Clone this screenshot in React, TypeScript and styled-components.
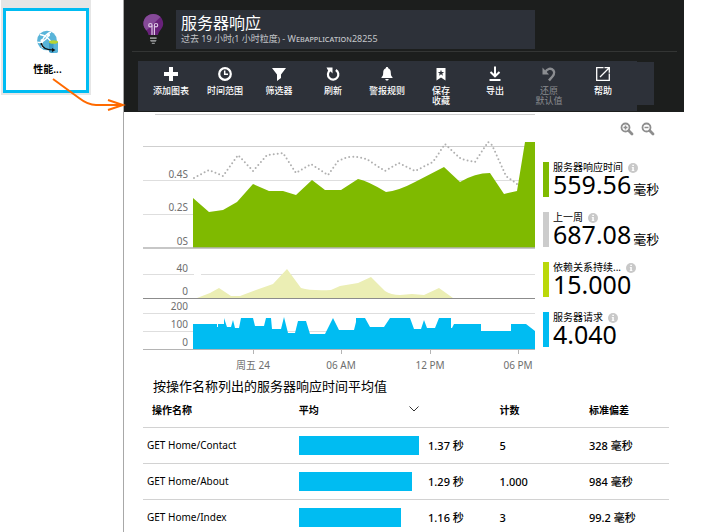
import React from "react";
import styled, { createGlobalStyle } from "styled-components";

const CYAN = "#00bcf2";
const GREEN = "#7fba00";
const LIME = "#bad80a";
const SILVER = "#cccccc";

const GlobalStyle = createGlobalStyle`
  *, *::before, *::after { box-sizing: border-box; }
  body {
    margin: 0;
    background: #fff;
    color: #000;
    font-family: "Noto Sans", "Noto Sans CJK SC", sans-serif;
    font-size: 11px;
  }
  button { font: inherit; color: inherit; border: 0; padding: 0; background: none; cursor: pointer; }
  svg { display: block; }
`;

const Page = styled.div`
  position: relative;
  display: grid;
  grid-template-columns: 123px minmax(0, 1fr);
  height: 100vh;
  overflow: hidden;
`;

const TileColumn = styled.aside`
  padding-left: 1px;
`;

const TileFrame = styled.div`
  width: 90px;
  padding: 8px 2px 2px;
  background: #e6e6e6;
`;

const Tile = styled.button`
  display: flex;
  flex-direction: column;
  align-items: center;
  gap: 8px;
  width: 100%;
  height: 85px;
  padding: 19px 0 0 3px;
  border: 3px solid ${CYAN};
  background: #fff;
  font-size: 10px;
  line-height: 14px;
  font-weight: 600;
`;

const Connector = styled.svg`
  position: absolute;
  left: 50px;
  top: 76px;
  pointer-events: none;
`;

const Blade = styled.main`
  border-left: 1px solid #a8a8a8;
`;

const Header = styled.header`
  margin-right: 31px;
  padding: 10px 7px 1px 8px;
  background: #1c1e1d;
`;

const TitleRow = styled.div`
  display: grid;
  grid-template-columns: 44px minmax(0, 1fr);
  padding: 0 142px 2px 0;
  border-bottom: 1px solid #333534;
`;

const BulbCell = styled.div`
  padding: 4px 0 0 10px;
`;

const TitlePanel = styled.div`
  height: 39px;
  padding: 3px 5px 0;
  background: #2d3139;
  overflow: hidden;
  white-space: nowrap;
`;

const Title = styled.h1`
  margin: 0;
  font-size: 16px;
  line-height: 20px;
  font-weight: 400;
  color: #fff;
`;

const Subtitle = styled.p`
  margin: 0;
  font-size: 9px;
  line-height: 12px;
  font-variant: small-caps;
  color: #c4c6c9;
`;

const ToolbarRow = styled.div`
  display: flex;
  padding: 9px 23px 0 6px;
`;

const Toolbar = styled.nav`
  flex: 1;
  display: grid;
  grid-template-columns: repeat(9, minmax(0, 1fr));
  height: 50px;
  padding: 5px 7px 0 6px;
  background: #2d3139;
`;

const ToolbarEnd = styled.div`
  width: 17px;
  height: 43px;
  margin-top: 1px;
  background: #2d3139;
`;

const ToolButton = styled.button<{ $dim?: boolean }>`
  display: flex;
  flex-direction: column;
  align-items: center;
  gap: 4px;
  color: ${(p) => (p.$dim ? "#8b8d91" : "#fff")};
  font-size: 9px;
  line-height: 10px;
  font-weight: ${(p) => (p.$dim ? 400 : 500)};
  white-space: pre-line;
`;

const Metrics = styled.section`
  display: grid;
  grid-template-columns: minmax(0, 1fr) 172px;
  column-gap: 8px;
  padding-left: 19px;
`;

const Plot = styled.svg`
  width: 100%;
  height: auto;
`;

const AxisText = styled.text`
  font-size: 10px;
  fill: #6e6e6e;
`;

const Side = styled.div`
  padding-top: 10px;
`;

const ZoomButtons = styled.div`
  display: flex;
  gap: 7px;
  padding-left: 77px;
  margin-bottom: 26px;
`;

const Legend = styled.ul`
  display: grid;
  gap: 15px;
  margin: 0;
  padding: 0;
  list-style: none;
`;

const LegendItem = styled.li<{ $color: string }>`
  height: 35px;
  padding-left: 4px;
  border-left: 6px solid ${(p) => p.$color};
  white-space: nowrap;
`;

const LegendLabel = styled.div`
  display: flex;
  align-items: center;
  gap: 5px;
  font-size: 10px;
  line-height: 11px;
`;

const LegendValue = styled.div`
  font-size: 25px;
  line-height: 23px;
`;

const Unit = styled.span`
  margin-left: 2px;
  font-size: 13px;
`;

const Operations = styled.section`
  margin-right: 46px;
  padding-left: 19px;
`;

const SectionTitle = styled.h2`
  margin: 0;
  padding-left: 10px;
  font-size: 13px;
  line-height: 20px;
  font-weight: 400;
`;

const Table = styled.table`
  width: 100%;
  table-layout: fixed;
  border-collapse: collapse;
`;

const HeadCell = styled.th<{ $indent?: number }>`
  height: 31px;
  padding: 0 0 4px ${(p) => p.$indent || 0}px;
  border-bottom: 1px solid #d2d2d2;
  text-align: left;
  font-size: 10px;
  font-weight: 700;
`;

const SortButton = styled.button`
  display: flex;
  align-items: center;
  justify-content: space-between;
  width: 120px;
  font-weight: 700;
`;

const Cell = styled.td<{ $indent?: number; $strong?: boolean }>`
  height: 36px;
  padding: 0 0 0 ${(p) => p.$indent || 0}px;
  border-bottom: 1px solid #d2d2d2;
  font-size: ${(p) => (p.$strong ? 11 : 10)}px;
  font-weight: ${(p) => (p.$strong ? 500 : 400)};
  white-space: nowrap;
`;

const Bar = styled.div`
  height: 19px;
  background: ${CYAN};
`;

const InfoIcon = () => (
  <svg width="10" height="10" viewBox="0 0 10 10" aria-hidden="true">
    <circle cx="5" cy="5" r="5" fill="#c8c8c8" />
    <path d="M4.3 1.8h1.6v1.3H4.3zM3.8 4h2v3.2h.6v.8H3.7v-.8h.6V4.8h-.5z" fill="#fff" />
  </svg>
);

const Magnifier = ({ plus }: { plus?: boolean }) => (
  <svg width="14" height="14" viewBox="0 0 14 14" fill="none" stroke="#8e8e8e">
    <circle cx="5.5" cy="5.5" r="4" strokeWidth="1.8" />
    <path d="M8.800 8.800 12 12" strokeWidth="2.800" strokeLinecap="round" />
    <path d={plus ? "M3.500 5.500h4M5.500 3.500v4" : "M3.500 5.500h4"} strokeWidth="1.500" />
  </svg>
);

const Bulb = () => (
  <svg width="22" height="31" viewBox="0 0 22 31" aria-hidden="true">
    <path d="M11.300 0C5.500 0 1.400 4.400 1.400 9.800c0 4.500 4 6.400 5.200 11.200h9.400C17.200 16.200 21.200 14.300 21.200 9.800 21.200 4.400 17.100 0 11.300 0z" fill="#68217a" />
    <path d="M11.300 0C5.500 0 1.400 4.400 1.400 9.800c0 3 1.500 4.800 3 6.700L18.500 3C16.500 1 14 0 11.300 0z" fill="#854a98" />
    <g fill="none" stroke="#dcc6e4" strokeWidth="1.200">
      <circle cx="8.400" cy="11.200" r="1.700" />
      <circle cx="14" cy="11.200" r="1.700" />
      <path d="M10 11.500V21M12.400 11.500V21" />
    </g>
    <path d="M8 23.200h6.600v1.700H8zM8 26h6.600l-.8 1.700H8.800zM9.800 28.700h3v1.200h-3z" fill="#8f9192" />
  </svg>
);

const AppTileIcon = () => (
  <svg width="24" height="24" viewBox="0 0 24 24" aria-hidden="true">
    <circle cx="11" cy="10.500" r="9.800" fill="#59b4d9" />
    <g fill="none" stroke="#fff" strokeWidth="1.400">
      <path d="M4 4.500C9 5 14 9 16 14" />
      <path d="M15 2C8 5 5 11 6.500 18" />
      <path d="M1.500 12C5 14 11 9 13 5" />
    </g>
    <circle cx="12.500" cy="5" r="1.600" fill="#fff" />
    <circle cx="6" cy="10.500" r="1.500" fill="#fff" />
    <path d="M13 12h9v9.500c0 2-9 2-9 0z" fill="#3999c6" />
    <path d="M17.500 13h4.500v8.500c0 1-2 1.500-4.500 1.500z" fill="#59b4d9" />
    <ellipse cx="17.500" cy="12" rx="4.500" ry="1.800" fill="#b8d432" />
    <path d="M5.500 14c1 4 5 6 12 6" fill="none" stroke="#111" strokeWidth="1.200" />
    <path d="M16 18l3.500 2L16 22z" fill="#111" />
    <circle cx="5.500" cy="14" r="1" fill="#111" />
  </svg>
);

const icons: Record<string, React.ReactNode> = {
  add: <path d="M6 1h4v5h5v4h-5v5H6v-5H1V6h5z" fill="currentColor" />,
  clock: (
    <g fill="none" stroke="currentColor">
      <circle cx="8" cy="8" r="5.800" strokeWidth="2.200" />
      <path d="M7.700 4.500V8.300H11" strokeWidth="1.500" />
    </g>
  ),
  filter: <path d="M1 2h14L10 8.500V12l-4 3V8.500z" fill="currentColor" />,
  refresh: (
    <g>
      <path d="M10.800 4A5.200 5.200 0 1 1 5 4.300" fill="none" stroke="currentColor" strokeWidth="2.200" />
      <path d="M1.500 1.500H7.500V7.500L5.500 5.300 3.800 6z" fill="currentColor" />
    </g>
  ),
  bell: <path d="M8 1C7.200 1 6.800 1.500 6.800 2.200 4.800 2.900 4.200 4.500 4.200 6.800c0 2.500-.8 3.700-1.700 4.500v.7h11v-.7c-.9-.8-1.700-2-1.700-4.500 0-2.300-.6-3.900-2.600-4.600C9.200 1.500 8.800 1 8 1zM6.300 13h3.400c-.2 2-3.200 2-3.400 0z" fill="currentColor" />,
  save: (
    <path
      d="M3.500 2h9v12.500L8 11.500l-4.500 3zM8 3.700 7.200 6H4.900l1.800 1.400L6 9.700l2-1.400 2 1.400-.7-2.300L11.100 6H8.800z"
      fill="currentColor"
      fillRule="evenodd"
    />
  ),
  export: (
    <g fill="none" stroke="currentColor" strokeWidth="2">
      <path d="M8 .5v9M3.500 6 8 10.300 12.500 6M2.500 14h11" />
    </g>
  ),
  undo: (
    <g>
      <path d="M4 6.500C6 2.500 10 1.500 12.500 4.500c2 3 0 5-4.500 10" fill="none" stroke="currentColor" strokeWidth="2.400" />
      <path d="M1.500 1.500V8.500h6.500z" fill="currentColor" />
    </g>
  ),
  help: (
    <g fill="none" stroke="currentColor" strokeWidth="1.300">
      <path d="M8.500 1.700H1.700v12.600h12.600V7.500" />
      <path d="M5 11 14 2M9.500 1.700h4.800v5" />
    </g>
  ),
};

const tools = [
  { icon: "add", label: "添加图表" },
  { icon: "clock", label: "时间范围" },
  { icon: "filter", label: "筛选器" },
  { icon: "refresh", label: "刷新" },
  { icon: "bell", label: "警报规则" },
  { icon: "save", label: "保存\n收藏" },
  { icon: "export", label: "导出" },
  { icon: "undo", label: "还原\n默认值", dim: true },
  { icon: "help", label: "帮助" },
];

const legend = [
  { color: GREEN, label: "服务器响应时间", value: "559.56", unit: "毫秒" },
  { color: SILVER, label: "上一周", value: "687.08", unit: "毫秒" },
  { color: LIME, label: "依赖关系持续...", value: "15.000" },
  { color: CYAN, label: "服务器请求", value: "4.040" },
];

const operations = [
  { name: "GET Home/Contact", bar: 120, average: "1.37 秒", count: "5", deviation: "328 毫秒" },
  { name: "GET Home/About", bar: 113, average: "1.29 秒", count: "1.000", deviation: "984 毫秒" },
  { name: "GET Home/Index", bar: 102, average: "1.16 秒", count: "3", deviation: "99.2 毫秒" },
];

const columnWidths = ["29.6%", "24.6%", "13.6%", "17%", "15.2%"];

const yLabels: [string, number][] = [
  ["0.4S", 66], ["0.2S", 99], ["0S", 133], ["40", 160], ["0", 183], ["200", 198], ["100", 216], ["0", 234],
];
const xLabels: [string, number][] = [["周五 24", 110], ["06 AM", 198], ["12 PM", 287], ["06 PM", 375]];

const RESPONSE =
  "M50 136V86L66 100 80 98 94 90 110 72 126 79 140 79 153 83 169 68 182 78H198L215 67Q225 69 243 80 255 79 272 70L301 55 317 70Q332 61 347 61L361 82 374 79 382 30H392V136z";
const LAST_WEEK =
  "M51 66 66 58 80 64 95 43 110 59 124 43 140 41 153 61 168 52 185 63 195 49 205 45Q217 44 225 48L242 59 256 51 272 59 290 50 302 32 318 47 332 50 345 30 349 33 363 64 374 72";
const DEPENDENCY =
  "M54 186 67 181 76 176 88 184H97L113 178 130 172 144 157 158 176Q168 179 188 178L197 174 215 171 228 165 242 179Q248 183 257 183L269 182 281 183 296 176 310 186z";
const REQUESTS =
  "M50 237V212H74V215H75V212H81V206L84 215H88L90 208 92 216H96L98 206H110L112 214H121L123 206H128L129 217H138L141 205 145 221H152L155 209H163L167 222H182L190 206 196 218H211L213 210V206H222L227 215H241L247 206H267L271 217H278L281 208 284 216H292L296 206H308V216H309L311 212H338V219H368V212H383L392 219V237z";

const Chart = () => (
  <Plot viewBox="0 0 392 264" role="img" aria-label="服务器响应">
    <g fill="none" stroke="#dedede">
      <path d="M12 2.500H392M0 34.500H392" stroke="#cfcfcf" />
      <path d="M0 68.500H392M0 102.500H392M0 162.500H51M58 162.500H392M0 201.500H392M0 219.500H392" />
    </g>
    <path d={RESPONSE} fill={GREEN} />
    <path d={LAST_WEEK} fill="none" stroke="#b0b0b0" strokeWidth="2" strokeLinecap="round" strokeDasharray="0 4" />
    <path d={DEPENDENCY} fill="#ebeeb4" />
    <path d={REQUESTS} fill={CYAN} />
    <g fill="none" stroke="#b4b4b4">
      <path d="M0 136H392" strokeWidth="1.500" />
      <path d="M0 186.500H392" stroke="#8c8c8c" />
      <path d="M0 237.500H392M110.500 238v4M198.500 238v4M287.500 238v4M375.500 238v4" />
    </g>
    {yLabels.map(([label, y]) => (
      <AxisText key={y} x="45" y={y} textAnchor="end">{label}</AxisText>
    ))}
    {xLabels.map(([label, x]) => (
      <AxisText key={x} x={x} y="257" textAnchor="middle">{label}</AxisText>
    ))}
  </Plot>
);

export default function App() {
  return (
    <Page lang="zh-CN">
      <GlobalStyle />
      <TileColumn>
        <TileFrame>
          <Tile type="button">
            <AppTileIcon />
            性能...
          </Tile>
        </TileFrame>
      </TileColumn>

      <Blade>
        <Header>
          <TitleRow>
            <BulbCell><Bulb /></BulbCell>
            <TitlePanel>
              <Title>服务器响应</Title>
              <Subtitle>过去 19 小时(1 小时粒度) - Webapplication28255</Subtitle>
            </TitlePanel>
          </TitleRow>
          <ToolbarRow>
            <Toolbar>
              {tools.map((tool) => (
                <ToolButton key={tool.icon} type="button" $dim={tool.dim} disabled={tool.dim}>
                  <svg width="16" height="16" viewBox="0 0 16 16" aria-hidden="true">{icons[tool.icon]}</svg>
                  {tool.label}
                </ToolButton>
              ))}
            </Toolbar>
            <ToolbarEnd />
          </ToolbarRow>
        </Header>

        <Metrics>
          <Chart />
          <Side>
            <ZoomButtons>
              <button type="button" aria-label="放大"><Magnifier plus /></button>
              <button type="button" aria-label="缩小"><Magnifier /></button>
            </ZoomButtons>
            <Legend>
              {legend.map((item) => (
                <LegendItem key={item.label} $color={item.color}>
                  <LegendLabel>{item.label}<InfoIcon /></LegendLabel>
                  <LegendValue>
                    {item.value}
                    {item.unit && <Unit>{item.unit}</Unit>}
                  </LegendValue>
                </LegendItem>
              ))}
            </Legend>
          </Side>
        </Metrics>

        <Operations>
          <SectionTitle>按操作名称列出的服务器响应时间平均值</SectionTitle>
          <Table>
            <colgroup>
              {columnWidths.map((width, index) => (
                <col key={index} style={{ width }} />
              ))}
            </colgroup>
            <thead>
              <tr>
                <HeadCell scope="col" $indent={9}>操作名称</HeadCell>
                <HeadCell scope="col" colSpan={2}>
                  <SortButton type="button">
                    平均
                    <svg width="10" height="6" viewBox="0 0 10 6" fill="none" stroke="#333" aria-hidden="true">
                      <path d="M.5.5 5 5 9.500.5" />
                    </svg>
                  </SortButton>
                </HeadCell>
                <HeadCell scope="col">计数</HeadCell>
                <HeadCell scope="col">标准偏差</HeadCell>
              </tr>
            </thead>
            <tbody>
              {operations.map((op) => (
                <tr key={op.name}>
                  <Cell $indent={4}>{op.name}</Cell>
                  <Cell><Bar style={{ width: op.bar }} /></Cell>
                  <Cell $strong>{op.average}</Cell>
                  <Cell $strong>{op.count}</Cell>
                  <Cell $strong>{op.deviation}</Cell>
                </tr>
              ))}
            </tbody>
          </Table>
        </Operations>
      </Blade>

      <Connector width="76" height="36" viewBox="0 0 76 36" fill="none" stroke="#ff6a00" strokeWidth="2" aria-hidden="true">
        <path d="M3 3 29 22Q38 29 46 29H73" />
        <path d="M58 24 73 29 58 34" />
      </Connector>
    </Page>
  );
}
